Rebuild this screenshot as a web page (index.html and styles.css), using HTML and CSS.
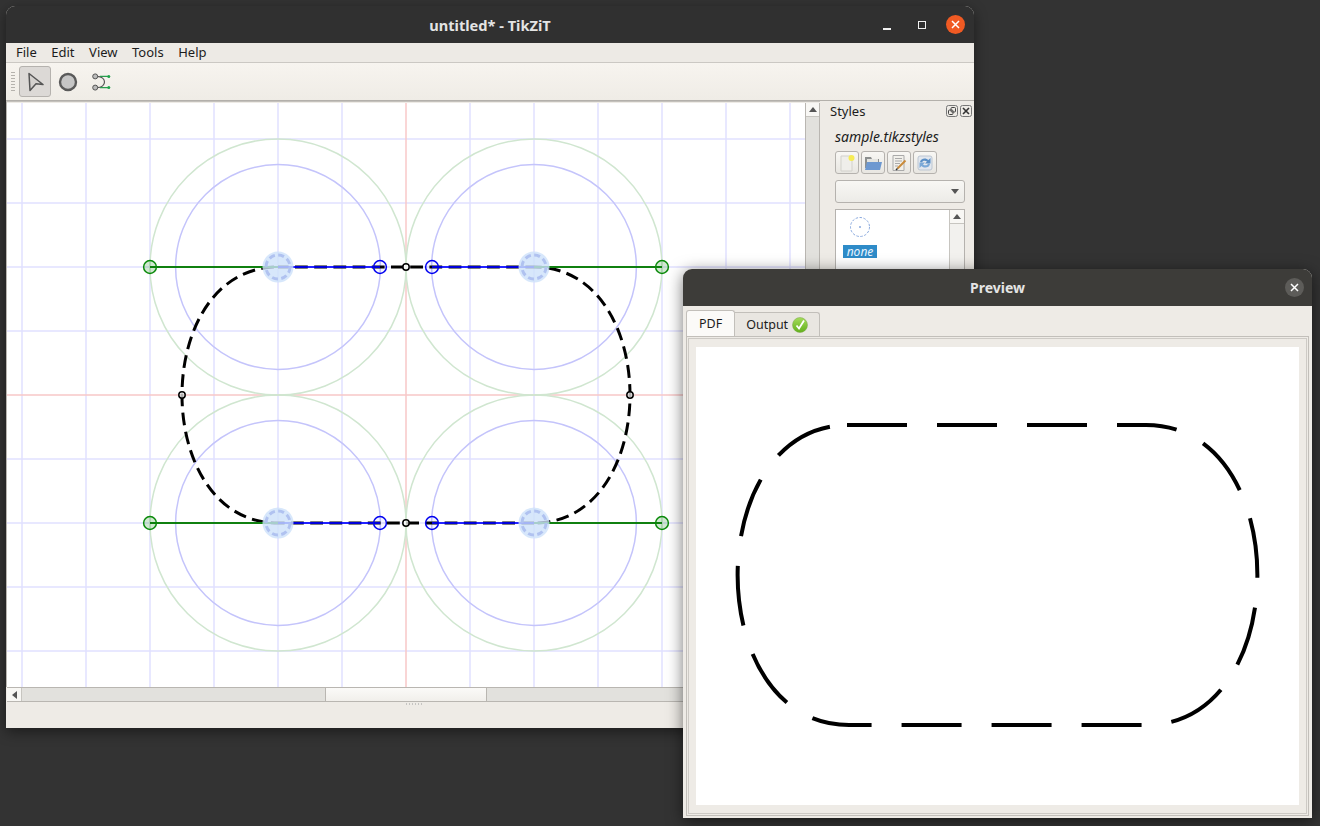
FILE: index.html
```html
<!DOCTYPE html>
<html lang="en">
<head>
    <meta charset="UTF-8">
    <title>TikZiT</title>
    <link rel="stylesheet" href="styles.css">
</head>
<body>
<div class="window main-window">
    <div class="titlebar">
        <span class="title title-main">untitled* - TikZiT</span>
        <div class="win-buttons">
            <span class="btn-min"></span>
            <span class="btn-max"></span>
            <svg class="btn-close" width="19" height="19" viewBox="0 0 19 19"><circle cx="9.5" cy="9.5" r="9.5" fill="#f05a23"/><path d="M6 6l7 7M13 6l-7 7" stroke="#fff" stroke-width="1.5"/></svg>
        </div>
    </div>
    <div class="menubar">
        <span>File</span><span>Edit</span><span>View</span><span>Tools</span><span>Help</span>
    </div>
    <div class="toolbar">
        <div class="grip"></div>
        <div class="tool active">
            <svg width="18" height="20" viewBox="0 0 18 20"><path d="M3 1.5L17 12.5L10 11.8L4 18.5Z" fill="#d4d1ce" stroke="#555" stroke-width="1.5" stroke-linejoin="round"/></svg>
        </div>
        <div class="tool">
            <svg width="20" height="20" viewBox="0 0 20 20"><circle cx="10" cy="10" r="8" fill="#c6c6c6" stroke="#5a5a5a" stroke-width="2.400"/></svg>
        </div>
        <div class="tool">
            <svg width="22" height="22" viewBox="0 0 22 22"><path d="M7 5.400C17 5.400 17 16.600 7 16.600" fill="none" stroke="#555" stroke-width="1.200"/><path d="M10 5.400H18.800M10 16.600H18.800" stroke="#2a9d4e" stroke-width="1.200"/><circle cx="5.200" cy="5.400" r="2.500" fill="#bbb" stroke="#555"/><circle cx="5.200" cy="16.600" r="2.500" fill="#bbb" stroke="#555"/><circle cx="18.800" cy="5.400" r="1.500" fill="#1fa34a"/><circle cx="18.800" cy="16.600" r="1.500" fill="#1fa34a"/></svg>
        </div>
    </div>
    <div class="workspace">
        <div class="canvas-area">
            <div class="canvas-row">
                <svg class="canvas" width="798" height="584" viewBox="7 103 798 584">
                    <path class="grid" d="M22 103V687M86 103V687M150 103V687M214 103V687M278 103V687M342 103V687M470 103V687M534 103V687M598 103V687M662 103V687M726 103V687M790 103V687M7 139H805M7 203H805M7 267H805M7 331H805M7 459H805M7 523H805M7 587H805M7 651H805"/>
                    <path class="axis" d="M406 103V687M7 395H805"/>
                    <g class="ring-outer">
                        <circle cx="278" cy="267" r="128"/><circle cx="534" cy="267" r="128"/>
                        <circle cx="278" cy="523" r="128"/><circle cx="534" cy="523" r="128"/>
                    </g>
                    <g class="ring-inner">
                        <circle cx="278" cy="267" r="102.400"/><circle cx="534" cy="267" r="102.400"/>
                        <circle cx="278" cy="523" r="102.400"/><circle cx="534" cy="523" r="102.400"/>
                    </g>
                    <g class="edge">
                        <path class="edge-left" d="M278 267C150 267 150 523 278 523"/>
                        <path class="edge-right" d="M534 267C662 267 662 523 534 523"/>
                        <path class="edge-top" d="M278 267H534"/>
                        <path class="edge-bottom" d="M278 523H534"/>
                    </g>
                    <path class="handle-line-green" d="M150 267H278M534 267H662M150 523H278M534 523H662"/>
                    <path class="handle-line-blue" d="M278 267H380M432 267H534M278 523H380M432 523H534"/>
                    <g class="node">
                        <circle cx="278" cy="267" r="15.500"/><circle cx="534" cy="267" r="15.500"/>
                        <circle cx="278" cy="523" r="15.500"/><circle cx="534" cy="523" r="15.500"/>
                    </g>
                    <g class="node-dash">
                        <circle cx="278" cy="267" r="12"/><circle cx="534" cy="267" r="12"/>
                        <circle cx="278" cy="523" r="12"/><circle cx="534" cy="523" r="12"/>
                    </g>
                    <g class="handle-green">
                        <circle cx="150" cy="267" r="6.400"/><circle cx="662" cy="267" r="6.400"/>
                        <circle cx="150" cy="523" r="6.400"/><circle cx="662" cy="523" r="6.400"/>
                    </g>
                    <g class="handle-blue">
                        <circle cx="380" cy="267" r="6.400"/><circle cx="432" cy="267" r="6.400"/>
                        <circle cx="380" cy="523" r="6.400"/><circle cx="432" cy="523" r="6.400"/>
                    </g>
                    <g class="handle-mid">
                        <circle cx="406" cy="267" r="3.200"/><circle cx="406" cy="523" r="3.200"/>
                        <circle cx="182" cy="395" r="3.200"/><circle cx="630" cy="395" r="3.200"/>
                    </g>
                </svg>
                <div class="vscroll">
                    <div class="scroll-btn"><span class="arrow-up"></span></div>
                </div>
            </div>
            <div class="hscroll">
                <div class="scroll-btn"><span class="arrow-left"></span></div>
                <div class="trough trough-a"></div>
                <div class="thumb"></div>
                <div class="trough"></div>
            </div>
        </div>
        <div class="dock">
            <div class="dock-head">
                <span>Styles</span>
                <div class="dock-btns">
                    <svg width="12" height="12" viewBox="0 0 12 12"><rect x=".5" y=".5" width="11" height="11" rx="2" fill="none" stroke="#777"/><rect x="5" y="2.500" width="4.500" height="4.500" rx="1" fill="none" stroke="#444"/><rect x="2.500" y="5" width="4.500" height="4.500" rx="1" fill="none" stroke="#444"/></svg>
                    <svg width="12" height="12" viewBox="0 0 12 12"><rect x=".5" y=".5" width="11" height="11" rx="2" fill="none" stroke="#777"/><path d="M3 3l6 6M9 3l-6 6" stroke="#333" stroke-width="1.600"/></svg>
                </div>
            </div>
            <div class="dock-file">sample.tikzstyles</div>
            <div class="file-btns">
                <div class="file-btn">
                    <svg width="18" height="18" viewBox="0 0 18 18"><path d="M3 2H14V17H3Z" fill="#efeeea" stroke="#d2d1cb"/><circle cx="13.500" cy="4" r="3" fill="#f6ec55"/></svg>
                </div>
                <div class="file-btn">
                    <svg width="20" height="18" viewBox="0 0 20 18"><path d="M2 3H8L9 5H16V14H2Z" fill="#8c8f8f"/><path d="M4 5H15V9H4Z" fill="#e4e4e0"/><path d="M4 8H19L17 16H2Z" fill="#6d98d0"/></svg>
                </div>
                <div class="file-btn">
                    <svg width="18" height="18" viewBox="0 0 18 18"><path d="M3 1.500H14V16.500H3Z" fill="#f1f0eb" stroke="#aaa"/><path d="M5 4.500H12M5 7H12M5 9.500H10M5 12H8" stroke="#aaa"/><path d="M7.500 14.500L15.500 6.500" stroke="#c98a3a" stroke-width="2"/><path d="M6 16L7.500 14.500" stroke="#333" stroke-width="1.500"/></svg>
                </div>
                <div class="file-btn">
                    <svg width="18" height="18" viewBox="0 0 18 18"><rect x="2" y="2" width="14" height="14" rx="2" fill="#e2e7ee" stroke="#bcc6d2"/><path d="M4 8C4.500 4.500 9.500 3 12.500 6L14.500 4V9.500H9L11 7.500C9 6 6.500 6.500 6 8.500Z" fill="#5a8fc6"/><path d="M14 10C13.500 13.500 8.500 15 5.500 12L3.500 14V8.500H9L7 10.500C9 12 11.500 11.500 12 9.500Z" fill="#7ba9d8"/></svg>
                </div>
            </div>
            <div class="combo"><span class="combo-arrow"></span></div>
            <div class="style-list">
                <div class="style-item">
                    <svg width="22" height="22" viewBox="0 0 22 22"><circle cx="11" cy="11" r="9.500" fill="#fff" stroke="#8aa9dd" stroke-dasharray="2.500 1.500"/><circle cx="11" cy="11" r="1" fill="#8aa9dd"/></svg>
                    <span class="style-name">none</span>
                </div>
                <div class="list-scroll">
                    <div class="scroll-btn"><span class="arrow-up"></span></div>
                </div>
            </div>
        </div>
    </div>
    <div class="statusbar"><div class="size-grip"></div></div>
</div>

<div class="window preview-window">
    <div class="titlebar">
        <span class="title">Preview</span>
        <svg class="preview-close" width="19" height="19" viewBox="0 0 19 19"><circle cx="9.500" cy="9.500" r="9.500" fill="#5d5c59"/><path d="M6 6l7 7M13 6l-7 7" stroke="#fff" stroke-width="1.500"/></svg>
    </div>
    <div class="preview-body">
        <div class="tabs">
            <div class="tab tab-on">PDF</div>
            <div class="tab">Output
                <svg width="16" height="16" viewBox="0 0 16 16"><defs><linearGradient id="okFill" x1="0" y1="0" x2="0" y2="1"><stop offset="0" stop-color="#a6dc5c"/><stop offset="1" stop-color="#62b01c"/></linearGradient></defs><circle cx="8" cy="8" r="7.500" fill="url(#okFill)" stroke="#7aa84a" stroke-width=".5"/><path d="M4.500 8.500L7 11.500L12 3.500" fill="none" stroke="#fff" stroke-width="1.800"/></svg>
            </div>
        </div>
        <div class="tab-pane">
            <svg class="pdf-page" width="603" height="458" viewBox="696 347 603 458">
                <path class="pdf-shape" d="M847 425H1146C1294.500 425 1294.500 725 1146 725H849C700.500 725 700.500 425 849 425"/>
            </svg>
        </div>
    </div>
</div>
</body>
</html>
```

FILE: styles.css
```css
html, body { margin: 0; height: 100%; }
body { position: relative; width: 1320px; height: 826px; overflow: hidden; background-color: #333; font-family: "Noto Sans", "Open Sans", sans-serif; font-size: 13px; color: #1c1c1c; }

.window { position: absolute; display: flex; flex-direction: column; background-color: #eeebe6; border-radius: 9px 9px 0 0; overflow: hidden; box-sizing: border-box; }
.main-window { left: 6px; top: 6px; width: 968px; height: 722px; box-shadow: 0 4px 14px rgba(0,0,0,0.45); }
.preview-window { left: 683px; top: 269px; width: 629px; height: 549px; box-shadow: 0 3px 16px rgba(0,0,0,0.55); }

.titlebar { position: relative; flex: none; height: 37px; display: flex; align-items: center; justify-content: center; background-color: #303030; color: #e4e4e4; }
.preview-window .titlebar { background-color: #3d3c39; }
.title { font-weight: 700; font-size: 14px; }
.title-main { font-size: 14.600px; }
.win-buttons { position: absolute; right: 9px; top: 9px; display: flex; align-items: center; }
.btn-min { width: 8px; height: 2px; margin-top: 8px; margin-right: 27px; background-color: #f0f0f0; }
.btn-max { width: 6px; height: 6px; border: 1px solid #f0f0f0; margin-right: 20px; }
.preview-close { position: absolute; right: 8px; top: 9px; }

.menubar { flex: none; height: 20px; display: flex; gap: 14.500px; align-items: center; padding: 0 0 2px 10px; border-bottom: 1px solid #cbc8c3; box-sizing: border-box; background-color: #edeae5; }

.toolbar { flex: none; height: 38px; display: flex; align-items: center; gap: 1px; box-sizing: border-box; padding-left: 5px; background: linear-gradient(#f7f4ef, #efece6); border-bottom: 1px solid #b3b0ab; }
.grip { width: 4px; height: 22px; margin-right: 3px; background-image: radial-gradient(#b5b2ad 40%, transparent 45%); background-size: 2px 3px; }
.tool { width: 32px; height: 31px; display: flex; align-items: center; justify-content: center; box-sizing: border-box; border: 1px solid transparent; border-radius: 3px; }
.tool.active { background-color: #dcd9d6; border-color: #b5b2ae; }

.workspace { flex: none; height: 601px; display: flex; }
.canvas-area { width: 814px; flex: none; display: flex; flex-direction: column; }
.canvas-row { height: 586px; flex: none; display: flex; box-sizing: border-box; padding-top: 1px; border-top: 1px solid #c4c1bc; border-left: 1px solid #b9b6b1; }
.canvas { display: block; flex: none; background-color: #fff; }
.grid { stroke: #e1e1ff; stroke-width: 1.500; fill: none; }
.axis { stroke: #f8c8c8; stroke-width: 1.500; fill: none; }
.ring-outer circle { fill: none; stroke: #d0e6d0; stroke-width: 1.500; }
.ring-inner circle { fill: none; stroke: #c4c4fb; stroke-width: 1.500; }
.edge path { fill: none; stroke: #000; stroke-width: 3; stroke-dasharray: 12.800 6.400; }
.edge-left { stroke-dashoffset: -4; }
.edge-right { stroke-dashoffset: -14; }
.edge-top { stroke-dashoffset: 2.200; }
.edge-bottom { stroke-dashoffset: 6.200; }
.handle-line-green { stroke: #108010; stroke-width: 2; fill: none; }
.handle-line-blue { stroke: rgba(0,0,255,0.85); stroke-width: 2; fill: none; }
.node circle { fill: rgba(205,225,250,0.8); }
.node-dash circle { fill: none; stroke: #b0c2f0; stroke-width: 3; stroke-dasharray: 6 3.400; }
.handle-green circle { fill: rgba(0,128,0,0.18); stroke: #0a8a0a; stroke-width: 1.500; }
.handle-blue circle { fill: rgba(0,0,255,0.04); stroke: #0000f0; stroke-width: 1.500; }
.handle-mid circle { fill: rgba(255,255,255,0.7); stroke: #000; stroke-width: 1.500; }

.vscroll { flex: none; width: 13px; background-color: #e2e1dd; border-left: 1px solid #b9b6b1; border-right: 1px solid #b9b6b1; }
.scroll-btn { height: 13px; display: flex; align-items: center; justify-content: center; background-color: #f8f7f4; border-bottom: 1px solid #c7c5c0; }
.arrow-up { border-left: 4px solid transparent; border-right: 4px solid transparent; border-bottom: 5px solid #555; }
.arrow-left { border-top: 4px solid transparent; border-bottom: 4px solid transparent; border-right: 5px solid #555; }

.hscroll { height: 13px; flex: none; display: flex; background-color: #e2e1dd; border-top: 1px solid #b9b6b1; border-bottom: 1px solid #b9b6b1; margin-left: 1px; }
.hscroll .scroll-btn { width: 14px; height: auto; border-bottom: 0; border-right: 1px solid #c7c5c0; }
.trough { flex: 1; }
.trough-a { flex: none; width: 303px; }
.thumb { width: 160px; flex: none; background: linear-gradient(#fbfaf8, #f1efeb); border-left: 1px solid #b9b6b1; border-right: 1px solid #b9b6b1; }

.dock { flex: 1; padding-left: 10px; position: relative; }
.dock-head { display: flex; justify-content: space-between; align-items: center; height: 18px; padding-top: 1px; padding-right: 2px; }
.dock-btns { display: flex; gap: 2px; }
.dock-file { margin: 8px 0 0 5px; font-style: italic; font-size: 14px; line-height: 18px; }
.file-btns { display: flex; gap: 2px; margin: 5px 0 0 5px; }
.file-btn { width: 24px; height: 23px; display: flex; align-items: center; justify-content: center; box-sizing: border-box; border: 1px solid #b5b2ae; border-radius: 3px; background: linear-gradient(#f8f7f4, #e8e6e1); }
.combo { width: 130px; height: 23px; margin: 6px 0 0 5px; box-sizing: border-box; border: 1px solid #b5b2ae; border-radius: 3px; background: linear-gradient(#f8f7f4, #ecebe7); display: flex; align-items: center; justify-content: flex-end; padding-right: 5px; }
.combo-arrow { border-left: 4px solid transparent; border-right: 4px solid transparent; border-top: 5px solid #555; }
.style-list { width: 130px; height: 120px; margin: 6px 0 0 5px; box-sizing: border-box; border: 1px solid #b5b2ae; background-color: #fff; display: flex; justify-content: space-between; }
.style-item { width: 34px; margin-left: 7px; display: flex; flex-direction: column; align-items: center; padding-top: 6px; }
.style-name { display: block; width: 34px; height: 13px; margin-top: 7px; background-color: #2e8bc8; color: #e8f4ff; font-style: italic; font-size: 12px; line-height: 13px; text-align: center; }
.list-scroll { width: 14px; background-color: #f2f1ee; border-left: 1px solid #c7c5c0; }

.statusbar { flex: 1; position: relative; background-color: #eeebe6; }
.size-grip { position: absolute; left: 399px; top: 1px; width: 18px; height: 2px; opacity: 0.6; background-image: radial-gradient(#aaa 45%, transparent 50%); background-size: 3px 2px; }

.preview-body { flex: 1; display: flex; flex-direction: column; padding: 3px; }
.tabs { display: flex; align-items: flex-end; height: 27px; flex: none; }
.tab { display: flex; align-items: center; gap: 4px; height: 24px; box-sizing: border-box; padding: 0 11px; border: 1px solid #c2bfba; border-bottom: 0; border-left: 0; border-radius: 0 3px 0 0; background-color: #e9e6e1; font-size: 12.500px; }
.tab-on { height: 26px; border-left: 1px solid #c2bfba; border-radius: 3px 3px 0 0; background-color: #fbfaf8; padding: 0 12px; }
.tab-pane { flex: 1; border: 1px solid #c2bfba; outline: 1px solid #cdcac5; outline-offset: -3px; padding: 10px 9px; display: flex; }
.pdf-page { display: block; background-color: #fff; }
.pdf-shape { fill: none; stroke: #000; stroke-width: 4; stroke-dasharray: 60 30; }
```
